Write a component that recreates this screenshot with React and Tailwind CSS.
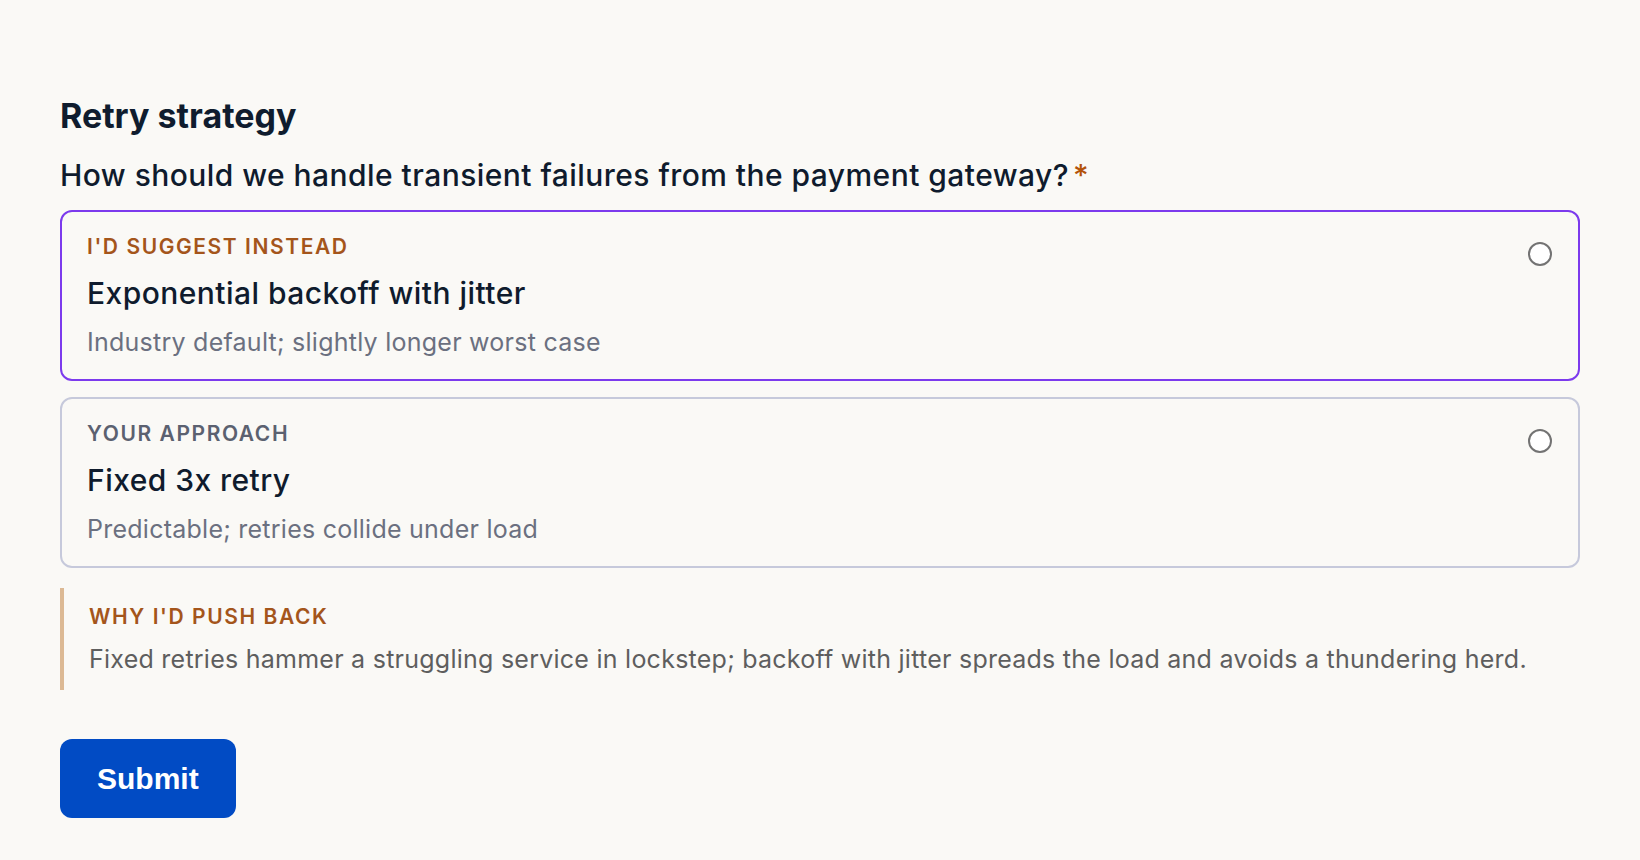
import React, { useState } from 'react'

const options = [
  {
    id: 'suggested',
    tag: "I'D SUGGEST INSTEAD",
    title: 'Exponential backoff with jitter',
    note: 'Industry default; slightly longer worst case',
    highlight: true,
  },
  {
    id: 'yours',
    tag: 'YOUR APPROACH',
    title: 'Fixed 3x retry',
    note: 'Predictable; retries collide under load',
    highlight: false,
  },
]

function OptionCard({ option, checked, onSelect }) {
  return (
    <label
      className={`flex items-start justify-between rounded-[12px] bg-[#faf9f6] pl-[25px] pr-[26px] pt-[22px] pb-[22px] cursor-pointer ${
        option.highlight ? 'border-2 border-[#7c3aed]' : 'border-2 border-[#c6c9db]'
      }`}
    >
      <div className="flex flex-col">
        <span
          className={`text-[21px] leading-[26px] font-semibold tracking-[0.075em] ${
            option.highlight ? 'text-[#a4551b]' : 'text-[#5b6170]'
          }`}
        >
          {option.tag}
        </span>
        <span className="mt-[16px] text-[30px] leading-[34px] font-medium tracking-[0.015em] text-[#0f1b2d]">
          {option.title}
        </span>
        <span className="mt-[17px] text-[25px] leading-[30px] tracking-[0.01em] text-[#6b7080]">
          {option.note}
        </span>
      </div>
      <input
        type="radio"
        name="retry"
        checked={checked}
        onChange={onSelect}
        className="mt-[8px] h-[24px] w-[24px] appearance-none rounded-full border-2 border-[#737373] bg-white checked:border-[7px] checked:border-[#7c3aed]"
      />
    </label>
  )
}

export default function App() {
  const [choice, setChoice] = useState(null)

  return (
    <div className="min-h-screen bg-[#faf9f6] px-[60px] pt-[95px] pb-10 font-['Inter','Noto_Sans',sans-serif]">
      <h2 className="text-[34px] leading-[41px] font-bold text-[#0f1c2e]">Retry strategy</h2>
      <p className="mt-[22px] text-[30px] leading-[35px] font-medium tracking-[0.015em] text-[#0f1b2d]">
        How should we handle transient failures from the payment gateway?
        <span className="ml-1 text-[#b45309]">*</span>
      </p>

      <div className="mt-[17px] flex flex-col gap-4">
        {options.map((o) => (
          <OptionCard
            key={o.id}
            option={o}
            checked={choice === o.id}
            onSelect={() => setChoice(o.id)}
          />
        ))}
      </div>

      <div className="mt-[20px] border-l-4 border-[#dcb994] pl-[25px] pt-[16px] pb-[16px]">
        <div className="text-[21px] leading-[26px] font-semibold tracking-[0.075em] text-[#a4551b]">
          WHY I'D PUSH BACK
        </div>
        <p className="mt-[14px] text-[25px] leading-[30px] tracking-[0.01em] text-[#5e5e5e]">
          Fixed retries hammer a struggling service in lockstep; backoff with jitter spreads the load and avoids a thundering herd.
        </p>
      </div>

      <button
        type="button"
        className="mt-[49px] rounded-[12px] bg-[#014bc4] px-[37px] py-[22px] text-[30px] leading-[35px] font-bold text-white font-['Liberation_Sans','Arial',sans-serif]"
      >
        Submit
      </button>
    </div>
  )
}
